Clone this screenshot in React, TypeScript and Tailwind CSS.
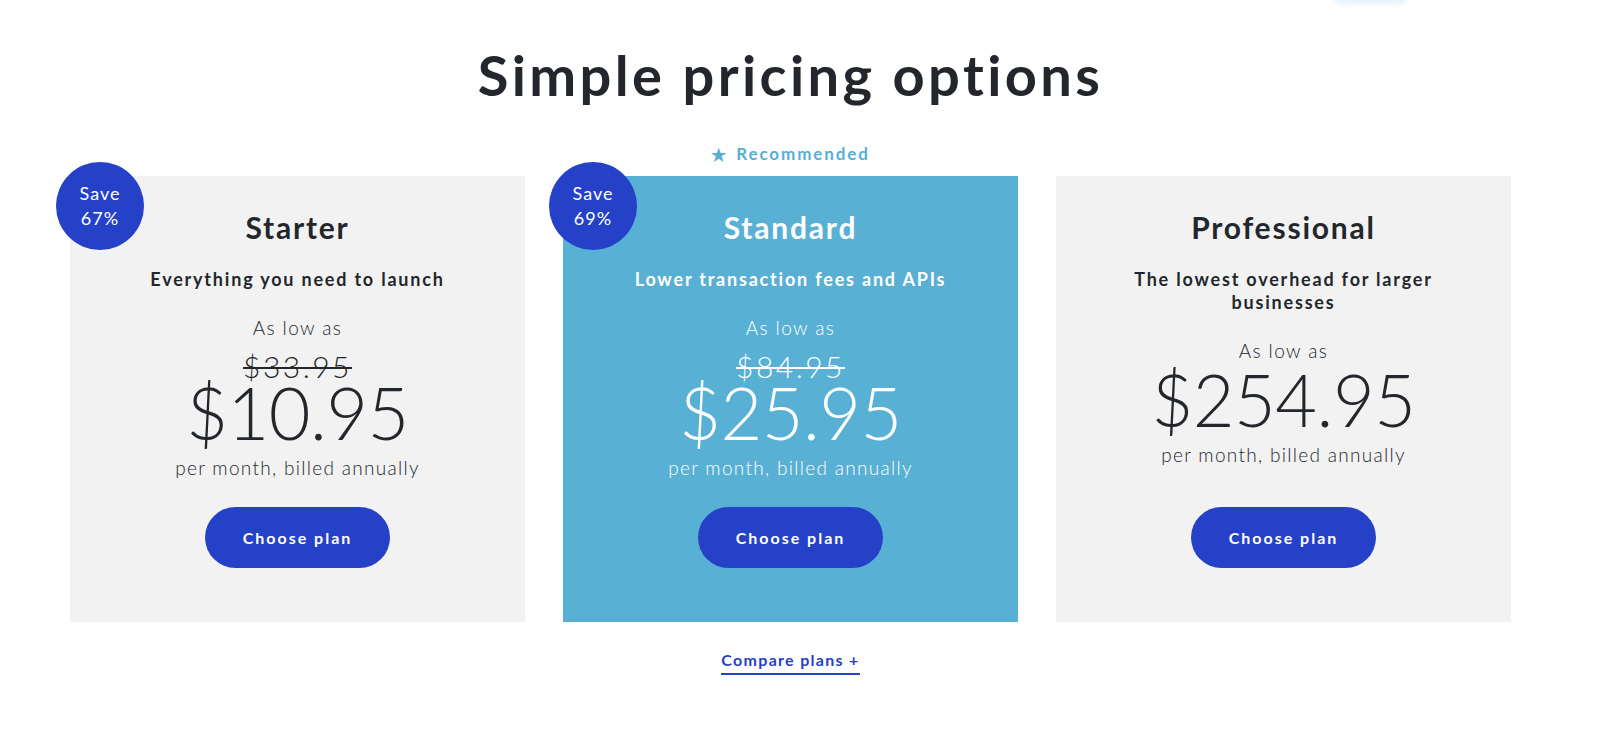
import React from "react";

type Plan = {
  name: string;
  subtitle: string[];
  old?: string;
  price: string;
  save?: string;
  featured?: boolean;
};

const plans: Plan[] = [
  { name: "Starter", subtitle: ["Everything you need to launch"], old: "$33.95", price: "$10.95", save: "67%" },
  { name: "Standard", subtitle: ["Lower transaction fees and APIs"], old: "$84.95", price: "$25.95", save: "69%", featured: true },
  { name: "Professional", subtitle: ["The lowest overhead for larger", "businesses"], price: "$254.95" },
];

function Card({ p }: { p: Plan }) {
  const dark = p.featured ? "text-white" : "text-[#23272c]";
  return (
    <div className="relative">
      {p.featured && (
        <div className="absolute left-0 right-0 -top-[33px] flex items-center justify-center gap-[10px] text-[17px] font-bold leading-[22px] tracking-[1.9px] text-[#56b0d3]">
          <span className="text-[17px] leading-none tracking-normal">★</span>
          <span>Recommended</span>
        </div>
      )}
      {p.save && (
        <div className="absolute -left-[14px] -top-[14px] z-10 flex h-[88px] w-[88px] flex-col items-center justify-center rounded-full bg-[#2541c8] text-[18px] leading-[25px] tracking-[1px] text-white">
          <span>Save</span>
          <span>{p.save}</span>
        </div>
      )}
      <div
        className={`flex h-[446px] flex-col items-center pt-[33px] pb-[54px] text-center ${
          p.featured ? "bg-[#58b0d4]" : "bg-[#f2f2f2]"
        } ${dark}`}
      >
        <div className="text-[30px] font-bold leading-[36px] tracking-[1.8px]">{p.name}</div>
        <div className="mt-[23px] text-[18px] font-bold leading-[23px] tracking-[1.8px]">
          {p.subtitle.map((s) => (
            <div key={s}>{s}</div>
          ))}
        </div>
        <div className="mt-[24px] text-[19px] font-light leading-[26px] tracking-[1.4px]">As low as</div>
        {p.old ? (
          <div className="mt-[10px] text-[30px] font-light leading-[30px] tracking-[2.5px] line-through decoration-[2px]">
            {p.old}
          </div>
        ) : (
          <div className="h-[4px]" />
        )}
        <div className="-mt-[4px] text-[72px] font-light leading-[70px] tracking-[-0.5px]">{p.price}</div>
        <div className="mt-[8px] text-[19px] font-light leading-[26px] tracking-[1.3px]">per month, billed annually</div>
        <button className="mt-auto flex h-[61px] w-[185px] items-center justify-center rounded-full bg-[#2541c8] text-[16px] font-bold tracking-[2px] text-white">
          Choose plan
        </button>
      </div>
    </div>
  );
}

export default function App() {
  return (
    <div
      className="relative min-h-[733px] w-full overflow-hidden bg-white"
      style={{ fontFamily: "Lato, 'Noto Sans', sans-serif" }}
    >
      <div className="pointer-events-none absolute left-[1330px] -top-[20px] h-[24px] w-[80px] rounded-full bg-[#e3f2f8] blur-[3px]" />
      <div className="ml-[70px] w-[1441px]">
        <h1 className="pt-[42px] text-center text-[56px] font-bold leading-[66px] tracking-[3.4px] text-[#23272c]">
          Simple pricing options
        </h1>
        <div className="mt-[68px] grid grid-cols-3 gap-[38px]">
          {plans.map((p) => (
            <Card key={p.name} p={p} />
          ))}
        </div>
        <div className="mt-[27px] flex justify-center">
          <a className="border-b-2 border-[#2541c8] pb-[2px] text-[16px] font-bold leading-[22px] tracking-[1.3px] text-[#2541c8]">
            Compare plans +
          </a>
        </div>
      </div>
    </div>
  );
}
